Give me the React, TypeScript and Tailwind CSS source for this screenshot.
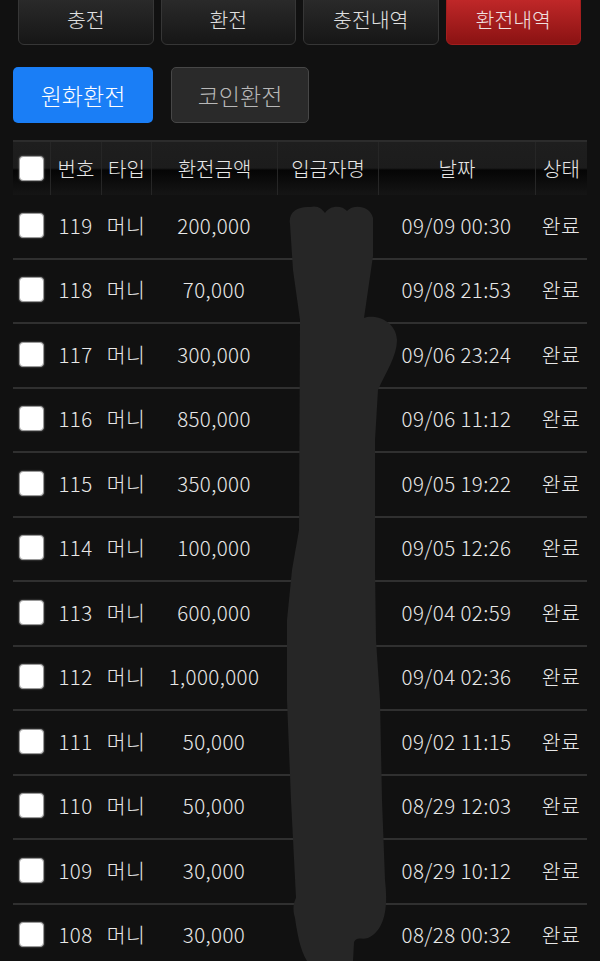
import React from 'react';

type Row = { no: number; amount: string; date: string };

const rows: Row[] = [
  { no: 119, amount: '200,000', date: '09/09 00:30' },
  { no: 118, amount: '70,000', date: '09/08 21:53' },
  { no: 117, amount: '300,000', date: '09/06 23:24' },
  { no: 116, amount: '850,000', date: '09/06 11:12' },
  { no: 115, amount: '350,000', date: '09/05 19:22' },
  { no: 114, amount: '100,000', date: '09/05 12:26' },
  { no: 113, amount: '600,000', date: '09/04 02:59' },
  { no: 112, amount: '1,000,000', date: '09/04 02:36' },
  { no: 111, amount: '50,000', date: '09/02 11:15' },
  { no: 110, amount: '50,000', date: '08/29 12:03' },
  { no: 109, amount: '30,000', date: '08/29 10:12' },
  { no: 108, amount: '30,000', date: '08/28 00:32' },
];

const tabs = ['충전', '환전', '충전내역', '환전내역'];

const cols = 'grid grid-cols-[37px_51px_50px_126px_101px_157px_52px]';

const Check = () => (
  <div className="w-[25px] h-[25px] rounded-[4px] bg-white border border-[#9a9a9a] shadow-[0_0_2px_rgba(255,255,255,0.4)]" />
);

const App = () => {
  return (
    <div
      className="relative w-[600px] h-[961px] overflow-hidden bg-[#111111] text-[#e8e8e8] font-light"
      style={{ fontFamily: '"Noto Sans CJK KR", "Noto Sans", sans-serif' }}
    >
      {/* top tabs */}
      <div className="flex gap-[7px] pl-[18px] pr-[19px] -mt-[6px]">
        {tabs.map((t, i) => (
          <div
            key={t}
            className={`flex-1 h-[51px] rounded-md flex items-center justify-center text-[20.5px] border ${
              i === 3
                ? 'bg-[linear-gradient(to_bottom,#c52a2b,#8a1212)] border-[#a31e1e] text-[#f0e0e0]'
                : 'bg-[linear-gradient(to_bottom,#2c2c2c,#161616)] border-[#363636] text-[#e0e0e0]'
            }`}
          >
            {t}
          </div>
        ))}
      </div>

      {/* sub tabs */}
      <div className="flex gap-[18px] pl-[13px] mt-[22px]">
        <div className="w-[140px] h-[56px] rounded-[5px] bg-[#1a7ef6] flex items-center justify-center text-[23px] text-white">
          원화환전
        </div>
        <div className="w-[138px] h-[56px] rounded-[5px] bg-[#2a2a2a] border border-[#474747] flex items-center justify-center text-[23px] text-[#b8b8b8]">
          코인환전
        </div>
      </div>

      {/* table */}
      <div className="mx-[13px] mt-[17px]">
        <div
          className={`${cols} h-[55px] border-t-2 border-[#2c2c2c] bg-[linear-gradient(to_bottom,#1e1e1e_0%,#1c1c1c_49%,#050505_53%,#151515_100%)] text-[20px]`}
        >
          {['', '번호', '타입', '환전금액', '입금자명', '날짜', '상태'].map((h, i) => (
            <div
              key={i}
              className={`flex items-center justify-center ${i > 0 ? 'border-l border-[#262626]' : ''}`}
            >
              {i === 0 ? <Check /> : h}
            </div>
          ))}
        </div>
        {rows.map(r => (
          <div
            key={r.no}
            className={`${cols} h-[64.5px] border-b-2 border-[#303030] text-[20.5px] tracking-[0.4px] pb-[2px]`}
          >
            <div className="flex items-center justify-center">
              <Check />
            </div>
            <div className="flex items-center justify-center">{r.no}</div>
            <div className="flex items-center justify-center">머니</div>
            <div className="flex items-center justify-center">{r.amount}</div>
            <div />
            <div className="flex items-center justify-center">{r.date}</div>
            <div className="flex items-center justify-center">완료</div>
          </div>
        ))}
      </div>

      {/* redaction scribble */}
      <svg className="absolute inset-0 pointer-events-none" width="600" height="961" viewBox="0 0 600 961">
        <path
          fill="#262626"
          d="M 290 224 C 288 212, 298 206, 310 207 C 318 205, 322 209, 325 213 C 330 205, 342 205, 347 211 C 353 204, 370 205, 373 218 L 373 256 L 364 318 C 374 314, 396 320, 397 340 C 397 356, 386 372, 378 390 L 375 440 L 375 570 L 376 640 L 380 700 L 382 800 L 385 880 C 388 905, 386 930, 368 938 C 361 940, 357 936, 354 942 L 353 961 L 307 961 C 300 950, 297 932, 295 918 C 292 908, 294 902, 296 898 L 291 800 L 287 700 L 287 620 L 292 570 L 299 530 L 300 320 L 293 270 Z"
        />
      </svg>
    </div>
  );
};

export default App;
